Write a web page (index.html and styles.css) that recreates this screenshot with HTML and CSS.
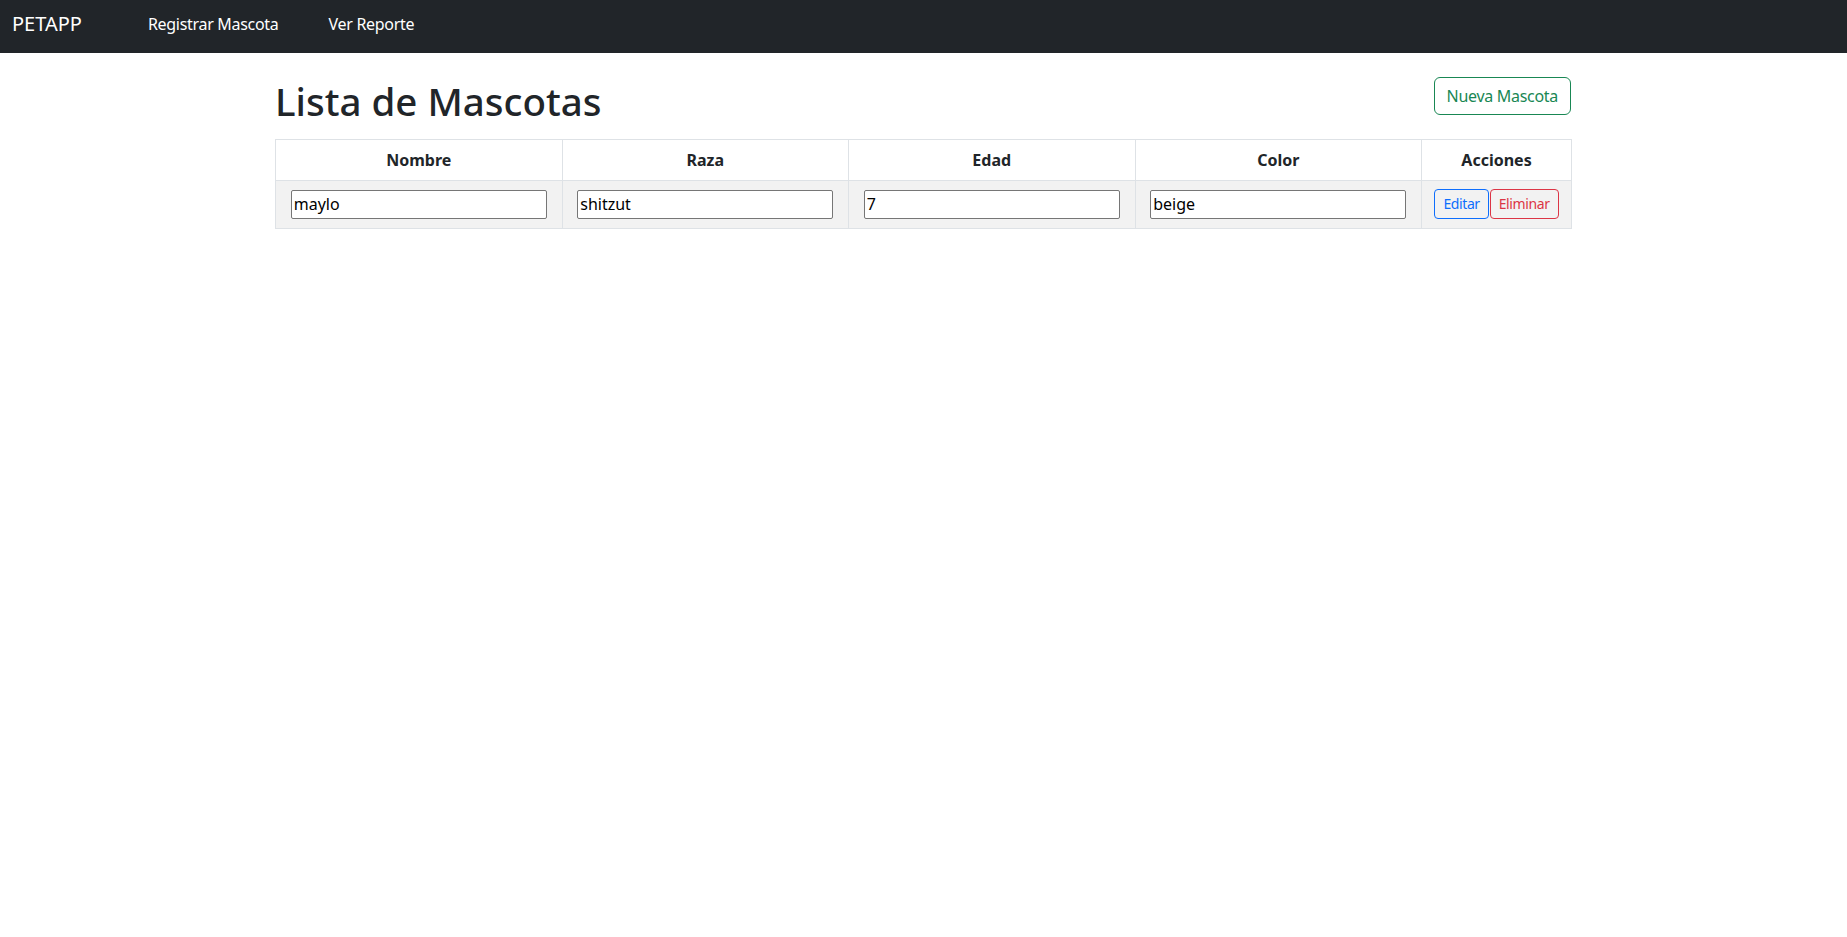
FILE: index.html
```html
<!DOCTYPE html>
<html lang="es">
<head>
<meta charset="utf-8">
<title>PETAPP</title>
<link rel="stylesheet" href="styles.css">
</head>
<body>
<nav class="navbar">
  <a class="brand" href="#">PETAPP</a>
  <a class="nav-link" href="#">Registrar Mascota</a>
  <a class="nav-link" href="#">Ver Reporte</a>
</nav>
<main class="container">
  <div class="page-head">
    <h1 class="title">Lista de Mascotas</h1>
    <button class="btn btn-outline-success">Nueva Mascota</button>
  </div>
  <table class="pets">
    <colgroup>
      <col class="c-data"><col class="c-data"><col class="c-data"><col class="c-data"><col class="c-actions">
    </colgroup>
    <thead>
      <tr><th>Nombre</th><th>Raza</th><th>Edad</th><th>Color</th><th>Acciones</th></tr>
    </thead>
    <tbody>
      <tr class="striped">
        <td><input class="field" type="text" value="maylo"></td>
        <td><input class="field" type="text" value="shitzut"></td>
        <td><input class="field" type="text" value="7"></td>
        <td><input class="field" type="text" value="beige"></td>
        <td class="actions"><button class="btn-sm btn-outline-primary">Editar</button><button class="btn-sm btn-outline-danger">Eliminar</button></td>
      </tr>
    </tbody>
  </table>
</main>
</body>
</html>
```
FILE: styles.css
```css
* { box-sizing: border-box; }
body {
  margin: 0;
  font-family: "Noto Sans", "Open Sans", sans-serif;
  font-size: 16px;
  line-height: 1.5;
  color: #212529;
  background: #fff;
}
.navbar {
  height: 53px;
  background: #212529;
  display: flex;
  align-items: center;
  padding: 0 12px 5px;
}
.brand {
  font-size: 20px;
  color: #fff;
  text-decoration: none;
  margin-right: 41px;
}
.nav-link {
  color: #fff;
  text-decoration: none;
  font-size: 16px;
  padding: 0 25px;
  letter-spacing: -0.3px;
}
.container {
  width: 1297px;
  padding-right: 1px;
  margin: 24px auto 0;
}
.page-head {
  display: flex;
  justify-content: space-between;
  align-items: flex-start;
  margin-bottom: 14px;
}
.title {
  margin: 0;
  font-size: 38.5px;
  line-height: 48px;
  font-weight: 500;
}
.btn {
  font-family: inherit;
  font-size: 16px;
  line-height: 24px;
  padding: 6px 12px;
  border-radius: 6px;
  background: #fff;
  letter-spacing: -0.3px;
  cursor: pointer;
}
.btn-outline-success { color: #198754; border: 1px solid #198754; }
.pets {
  width: 100%;
  border-collapse: collapse;
  table-layout: fixed;
}
.c-data { width: 286.5px; }
.c-actions { width: 150px; }
.pets th, .pets td {
  border: 1px solid #dee2e6;
  text-align: center;
  vertical-align: middle;
}
.pets th { font-weight: 700; line-height: 24px; padding: 8px; }
.pets td { padding: 8px 8px 9px; }
.striped td { background: #f2f2f2; }
.field {
  width: 256px;
  height: 29px;
  font-family: inherit;
  font-size: 16px;
  color: #000;
  padding: 1px 2px;
  border: 1px solid #767676;
  border-radius: 2px;
  background: #fff;
  display: block;
  margin: 0 auto;
}
.actions { white-space: nowrap; font-size: 0; line-height: 0; }
.btn-sm {
  font-family: "Noto Sans", "Open Sans", sans-serif;
  font-size: 14px;
  line-height: 20px;
  height: 30px;
  padding: 4px 8px;
  border-radius: 4px;
  background: transparent;
  vertical-align: top;
  letter-spacing: -0.4px;
  cursor: pointer;
}
.btn-outline-primary { color: #0d6efd; border: 1px solid #0d6efd; margin-right: 1px; }
.btn-outline-danger { color: #dc3545; border: 1px solid #dc3545; }
```
